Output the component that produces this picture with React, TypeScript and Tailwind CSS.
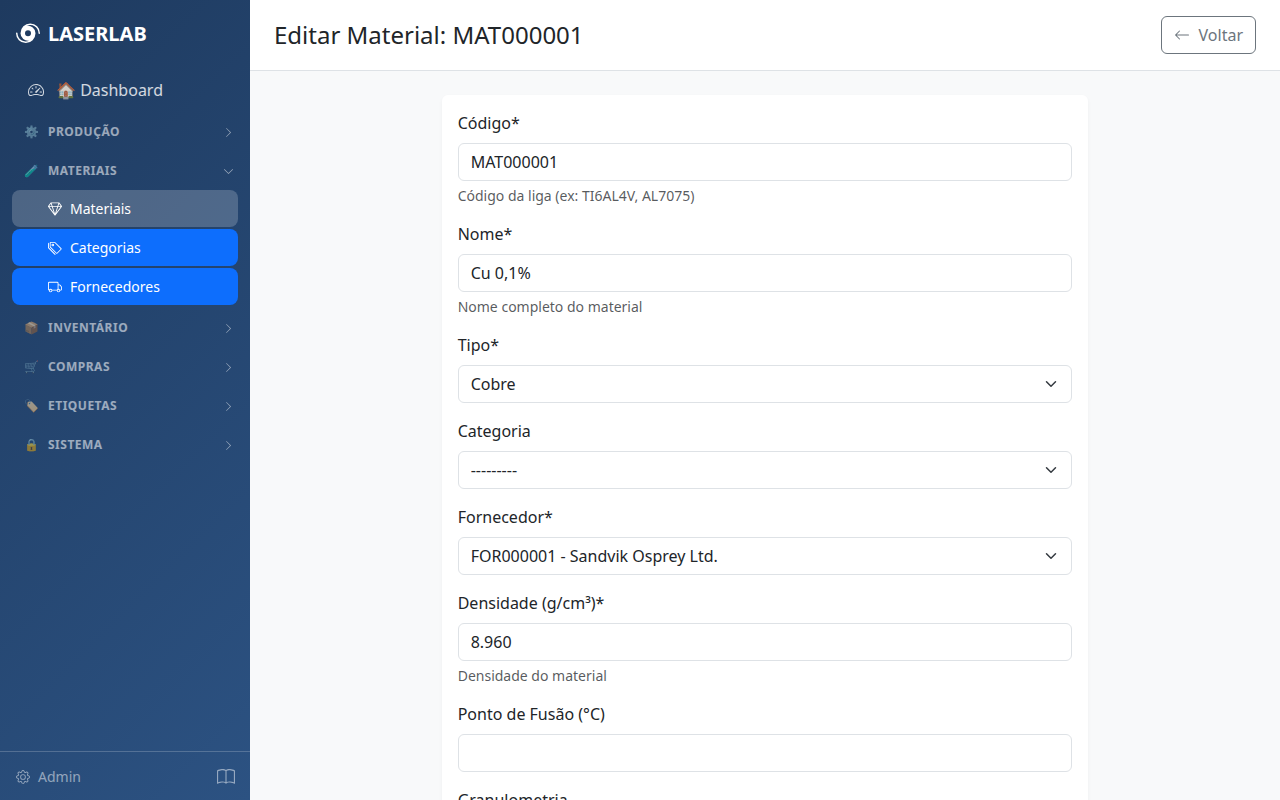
import React, { useState } from 'react';
import {
  BsArrowLeft,
  BsBook,
  BsChevronDown,
  BsChevronRight,
  BsGear,
  BsGem,
  BsHurricane,
  BsSpeedometer2,
  BsTags,
  BsTruck,
} from 'react-icons/bs';

const sections = [
  { id: 'producao', emoji: '⚙️', label: 'Produção', items: [] },
  {
    id: 'materiais',
    emoji: '🧪',
    label: 'Materiais',
    items: [
      { label: 'Materiais', icon: BsGem, active: true },
      { label: 'Categorias', icon: BsTags, active: false },
      { label: 'Fornecedores', icon: BsTruck, active: false },
    ],
  },
  { id: 'inventario', emoji: '📦', label: 'Inventário', items: [] },
  { id: 'compras', emoji: '🛒', label: 'Compras', items: [] },
  { id: 'etiquetas', emoji: '🏷️', label: 'Etiquetas', items: [] },
  { id: 'sistema', emoji: '🔒', label: 'Sistema', items: [] },
];

const Sidebar: React.FC = () => {
  const [open, setOpen] = useState('materiais');

  return (
    <aside className="sticky top-0 flex h-screen w-[250px] shrink-0 flex-col bg-[linear-gradient(135deg,#1e3a5f_0%,#2c5282_100%)]">
      <a href="#" className="flex items-center gap-2 px-4 pt-4 pb-5 text-xl leading-9 font-bold text-white">
        <BsHurricane className="size-6" />
        LASERLAB
      </a>

      <nav className="flex-1 px-3">
        <a href="#" className="mb-[5px] flex h-9 items-center gap-3 px-4 text-base text-white/80">
          <BsSpeedometer2 className="size-4" />
          <span>🏠 Dashboard</span>
        </a>

        {sections.map((section) => {
          const isOpen = open === section.id;
          return (
            <div key={section.id} className={isOpen ? 'mb-1' : 'mb-px'}>
              <button
                type="button"
                aria-expanded={isOpen}
                onClick={() => setOpen(isOpen ? '' : section.id)}
                className="flex h-[38px] w-full items-center pr-1 pl-3 text-xs font-bold tracking-[0.5px] text-white/55 uppercase"
              >
                <span className="w-6 text-left">{section.emoji}</span>
                <span>{section.label}</span>
                {isOpen ? <BsChevronDown className="ml-auto size-[11px]" /> : <BsChevronRight className="ml-auto size-[11px]" />}
              </button>
              {isOpen && (
                <ul className="flex flex-col gap-0.5">
                  {section.items.map(({ label, icon: Icon, active }) => (
                    <li key={label}>
                      <a
                        href="#"
                        className={`flex h-[37px] items-center gap-2 rounded-lg pl-9 text-sm text-white ${active ? 'bg-white/20' : 'bg-[#0d6efd]'}`}
                      >
                        <Icon className="size-[14px]" />
                        {label}
                      </a>
                    </li>
                  ))}
                </ul>
              )}
            </div>
          );
        })}
      </nav>

      <div className="flex items-center justify-between border-t border-white/20 pt-[15px] pr-[15px] pb-[13px] pl-4 text-sm text-white/50">
        <a href="#" className="flex items-center gap-2">
          <BsGear className="size-[14px]" />
          Admin
        </a>
        <a href="#" aria-label="Documentação">
          <BsBook className="size-[18px]" />
        </a>
      </div>
    </aside>
  );
};

interface FieldProps {
  id: string;
  label: string;
  help?: string;
  value?: string;
  options?: string[];
}

const Field: React.FC<FieldProps> = ({ id, label, help, value = '', options }) => {
  const control = 'block h-[38px] w-full rounded-md border border-[#dee2e6] bg-white px-3 text-base text-[#212529]';

  return (
    <div className="mb-4">
      <label htmlFor={id} className="mb-2 block w-fit">
        {label}
      </label>
      {options ? (
        <div className="relative">
          <select id={id} className={`${control} appearance-none`}>
            {options.map((option) => (
              <option key={option}>{option}</option>
            ))}
          </select>
          <svg
            viewBox="0 0 16 16"
            fill="none"
            stroke="#343a40"
            strokeWidth="2"
            strokeLinecap="round"
            strokeLinejoin="round"
            className="pointer-events-none absolute top-[13px] right-[15px] size-3"
          >
            <path d="m2 5 6 6 6-6" />
          </svg>
        </div>
      ) : (
        <input id={id} type="text" defaultValue={value} className={control} />
      )}
      {help && <p className="mt-1 text-sm leading-[21px] text-[#212529]/75">{help}</p>}
    </div>
  );
};

const App: React.FC = () => {
  return (
    <div className="flex min-h-screen bg-[#f8f9fa] font-['Noto_Sans',sans-serif] text-base text-[#212529]">
      <Sidebar />

      <div className="min-w-0 flex-1">
        <header className="flex items-center justify-between border-b border-[#dee2e6] bg-white px-6 py-4">
          <h1 className="text-2xl">Editar Material: MAT000001</h1>
          <a
            href="#"
            className="flex h-[38px] items-center gap-[9px] rounded-md border border-[#6c757d] px-3 text-[#6c757d]"
          >
            <BsArrowLeft className="size-4" />
            Voltar
          </a>
        </header>

        <main className="px-3 py-6">
          <div className="mx-auto w-2/3 px-3">
            <form className="rounded-md bg-white p-4 shadow-[0_2px_4px_rgba(0,0,0,0.04)]">
              <Field id="codigo" label="Código*" value="MAT000001" help="Código da liga (ex: TI6AL4V, AL7075)" />
              <Field id="nome" label="Nome*" value="Cu 0,1%" help="Nome completo do material" />
              <Field id="tipo" label="Tipo*" options={['Cobre']} />
              <Field id="categoria" label="Categoria" options={['---------']} />
              <Field id="fornecedor" label="Fornecedor*" options={['FOR000001 - Sandvik Osprey Ltd.']} />
              <Field id="densidade" label="Densidade (g/cm³)*" value="8.960" help="Densidade do material" />
              <Field id="fusao" label="Ponto de Fusão (°C)" />
              <Field id="granulometria" label="Granulometria" />
            </form>
          </div>
        </main>
      </div>
    </div>
  );
};

export default App;
